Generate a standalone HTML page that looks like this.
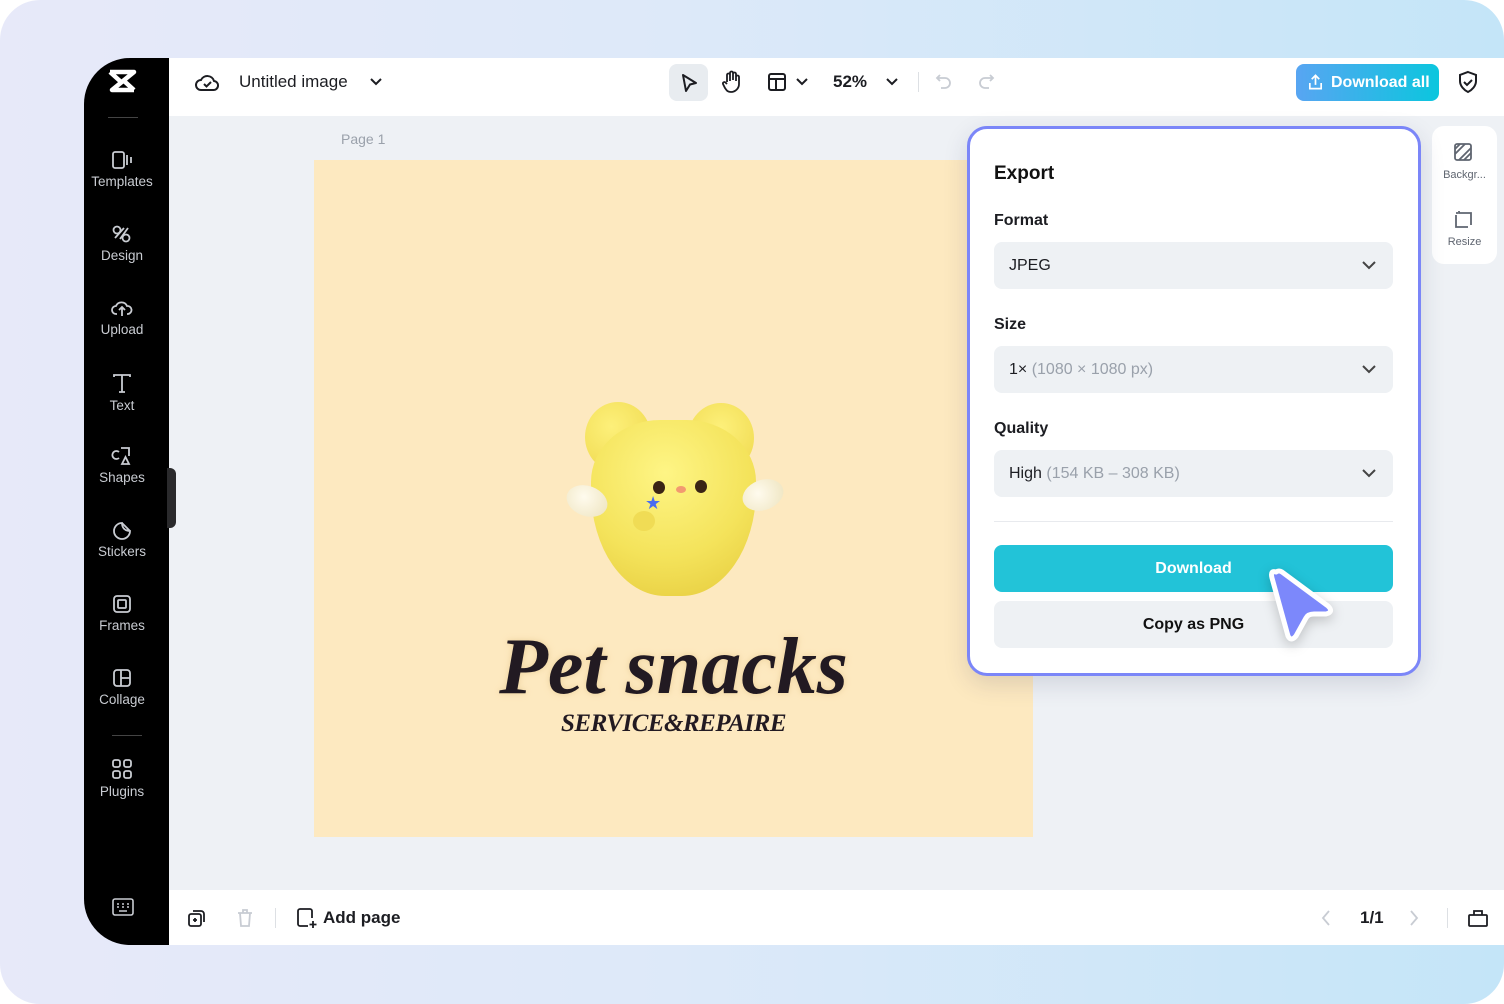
<!DOCTYPE html>
<html><head><meta charset="utf-8"><style>
*{box-sizing:border-box;margin:0;padding:0}
body{width:1504px;height:1004px;background:#fff;font-family:"Liberation Sans",sans-serif;position:relative;overflow:hidden}
.bg{position:absolute;inset:0;border-radius:40px;background:linear-gradient(90deg,#e7e9f9 0%,#dde9f9 45%,#c4e5f8 100%)}
.abs{position:absolute}
.side{left:84px;top:58px;width:85px;height:887px;background:#000;border-radius:46px 0 0 46px}
.top{left:169px;top:58px;width:1335px;height:58px;background:#fff}
.canvas{left:169px;top:116px;width:1335px;height:774px;background:#eef1f5}
.bottom{left:169px;top:890px;width:1335px;height:55px;background:#fff}
.nav{position:absolute;left:84px;width:76px;text-align:center;color:#c9ccd2;font-size:13.5px}
.nav svg{display:block;margin:0 auto 4px}
.field{position:absolute;left:994px;width:399px;height:47px;background:#eef1f4;border-radius:8px;font-size:16px;color:#1c1d22;padding:0 0 0 15px;line-height:47px}
.field .g{color:#9aa1ab}
.lbl{position:absolute;left:994px;font-size:16px;color:#1c1d22;font-weight:bold}
.chev{position:absolute;right:16px;top:17px}
</style></head><body>
<div class="bg"></div>
<div class="abs side"></div>
<div class="abs top"></div>
<div class="abs canvas"></div>
<div class="abs bottom"></div>
<svg class="abs" style="left:106px;top:68px" width="34" height="28" viewBox="0 0 34 28"><path d="M4 4h24L6 22h22M4 4l10 9M28 22L18 13" stroke="#fff" stroke-width="4.5" fill="none" stroke-linejoin="round"/></svg>
<div class="abs" style="left:108px;top:117px;width:30px;height:1px;background:#444"></div>
<div class="nav" style="top:150px"><svg width="22" height="20" viewBox="0 0 22 20" fill="none" stroke="#c9ccd2" stroke-width="1.8"><rect x="2" y="2" width="11" height="16" rx="2"/><path d="M16 5v10M20 7v6"/></svg>Templates</div>
<div class="nav" style="top:224px"><svg width="22" height="20" viewBox="0 0 22 20" fill="none" stroke="#c9ccd2" stroke-width="1.8"><circle cx="6" cy="6" r="3.5"/><circle cx="15" cy="14" r="3.5"/><path d="M9 15L17 4M4 14L13 4"/></svg>Design</div>
<div class="nav" style="top:298px"><svg width="22" height="20" viewBox="0 0 22 20" fill="none" stroke="#c9ccd2" stroke-width="1.8"><path d="M6 16H5a4 4 0 010-8 6 6 0 0111 0 4 4 0 011 8h-1M11 18v-8M8 12l3-3 3 3"/></svg>Upload</div>
<div class="nav" style="top:372px"><svg width="22" height="22" viewBox="0 0 22 22" fill="none" stroke="#c9ccd2" stroke-width="1.8"><path d="M3 5V3h16v2M11 3v17M8 20h6"/></svg>Text</div>
<div class="nav" style="top:446px"><svg width="22" height="20" viewBox="0 0 22 20" fill="none" stroke="#c9ccd2" stroke-width="1.8"><path d="M8 6a4 4 0 100 6M10 2h8v8M11 18l3.5-7 3.5 7z"/></svg>Shapes</div>
<div class="nav" style="top:520px"><svg width="22" height="20" viewBox="0 0 22 20" fill="none" stroke="#c9ccd2" stroke-width="1.8"><path d="M19 11a8 8 0 11-8-8c0 5 3 8 8 8zM11 3l8 8"/></svg>Stickers</div>
<div class="nav" style="top:594px"><svg width="22" height="20" viewBox="0 0 22 20" fill="none" stroke="#c9ccd2" stroke-width="1.8"><rect x="3" y="2" width="16" height="16" rx="3"/><rect x="7" y="6" width="8" height="8" rx="1"/></svg>Frames</div>
<div class="nav" style="top:668px"><svg width="22" height="20" viewBox="0 0 22 20" fill="none" stroke="#c9ccd2" stroke-width="1.8"><rect x="3" y="2" width="16" height="16" rx="3"/><path d="M10 2v16M10 10h9"/></svg>Collage</div>
<div class="abs" style="left:112px;top:735px;width:30px;height:1px;background:#444"></div>
<div class="nav" style="top:758px"><svg width="22" height="22" viewBox="0 0 22 22" fill="none" stroke="#c9ccd2" stroke-width="1.8"><rect x="2" y="2" width="7" height="7" rx="2"/><rect x="13" y="2" width="7" height="7" rx="2"/><rect x="2" y="13" width="7" height="7" rx="2"/><rect x="13" y="13" width="7" height="7" rx="2"/></svg>Plugins</div>
<svg class="abs" style="left:112px;top:898px" width="22" height="18" viewBox="0 0 22 18" fill="none" stroke="#c9ccd2" stroke-width="1.6"><rect x="1" y="1" width="20" height="16" rx="2"/><path d="M5 6h2M10 6h2M15 6h2M5 9h2M10 9h2M15 9h2M7 13h8"/></svg>
<div class="abs" style="left:167px;top:468px;width:9px;height:60px;background:#2a2a2c;border-radius:0 6px 6px 0"></div>
<svg class="abs" style="left:195px;top:71px" width="24" height="22" viewBox="0 0 24 22" fill="none" stroke="#1c1d22" stroke-width="2"><path d="M7 19H6a5 5 0 010-10 7 7 0 0113 1 4.5 4.5 0 01-1 9z"/><path d="M9 13l2.5 2.5L16 11"/></svg>
<div class="abs" style="left:239px;top:72px;font-size:17px;color:#1c1d22">Untitled image</div>
<svg class="abs" style="left:369px;top:77px" width="14" height="10" viewBox="0 0 14 10"><path d="M2 2l5 5 5-5" stroke="#1c1d22" stroke-width="2" fill="none"/></svg>
<div class="abs" style="left:669px;top:64px;width:39px;height:37px;background:#e8ecf0;border-radius:8px"></div>
<svg class="abs" style="left:679px;top:72px" width="20" height="22" viewBox="0 0 20 22"><path d="M4 3l13 8-6 1.5L7 19z" stroke="#1c1d22" stroke-width="2" fill="none" stroke-linejoin="round"/></svg>
<svg class="abs" style="left:721px;top:70px" width="22" height="24" viewBox="0 0 22 24" fill="none" stroke="#1c1d22" stroke-width="1.8"><path d="M6 12V5a1.5 1.5 0 013 0v6M9 10V3a1.5 1.5 0 013 0v7M12 10V4a1.5 1.5 0 013 0v7M15 10V7a1.5 1.5 0 013 0v7a8 8 0 01-8 8c-3 0-4-1-6-4l-2-4a1.5 1.5 0 012.5-1.5L6 14"/></svg>
<svg class="abs" style="left:767px;top:72px" width="20" height="20" viewBox="0 0 20 20" fill="none" stroke="#1c1d22" stroke-width="2"><rect x="2" y="2" width="16" height="16" rx="2"/><path d="M2 7h16M9 7v11"/></svg>
<svg class="abs" style="left:795px;top:77px" width="14" height="10" viewBox="0 0 14 10"><path d="M2 2l5 5 5-5" stroke="#1c1d22" stroke-width="2" fill="none"/></svg>
<div class="abs" style="left:833px;top:72px;font-size:17px;color:#1c1d22;font-weight:bold">52%</div>
<svg class="abs" style="left:885px;top:77px" width="14" height="10" viewBox="0 0 14 10"><path d="M2 2l5 5 5-5" stroke="#1c1d22" stroke-width="2" fill="none"/></svg>
<div class="abs" style="left:918px;top:72px;width:1px;height:20px;background:#dde0e4"></div>
<svg class="abs" style="left:934px;top:72px" width="20" height="20" viewBox="0 0 20 20" fill="none" stroke="#c8ccd3" stroke-width="1.8"><path d="M6 3L3 6l3 3M3 6h8a5 5 0 010 10H7"/></svg>
<svg class="abs" style="left:976px;top:72px" width="20" height="20" viewBox="0 0 20 20" fill="none" stroke="#c8ccd3" stroke-width="1.8"><path d="M14 3l3 3-3 3M17 6H9a5 5 0 000 10h4"/></svg>
<div class="abs" style="left:1296px;top:64px;width:143px;height:37px;border-radius:8px;background:linear-gradient(90deg,#58a5f2,#0bc6de);color:#fff;font-size:16px;font-weight:bold;line-height:37px;padding-left:35px">Download all</div>
<svg class="abs" style="left:1307px;top:73px" width="17" height="18" viewBox="0 0 18 18" fill="none" stroke="#fff" stroke-width="1.8"><path d="M9 12V2M5 6l4-4 4 4M3 10v6h12v-6"/></svg>
<svg class="abs" style="left:1457px;top:70px" width="22" height="24" viewBox="0 0 22 24" fill="none" stroke="#1c1d22" stroke-width="2"><path d="M11 2l8 3v6c0 5-4 9-8 11-4-2-8-6-8-11V5z"/><path d="M7 12l3 3 5-5"/></svg>
<div class="abs" style="left:341px;top:131px;font-size:14px;color:#9aa1ab">Page 1</div>
<div class="abs" style="left:314px;top:160px;width:719px;height:677px;background:#fde9c0"></div>
<div class="abs" style="left:585px;top:402px;width:66px;height:70px;border-radius:50%;background:radial-gradient(circle at 40% 35%,#fdf07a,#eed74a)"></div>
<div class="abs" style="left:688px;top:403px;width:66px;height:70px;border-radius:50%;background:radial-gradient(circle at 50% 35%,#fdf07a,#eed74a)"></div>
<div class="abs" style="left:591px;top:420px;width:165px;height:176px;border-radius:42% 42% 45% 45%/35% 35% 60% 60%;background:radial-gradient(circle at 45% 30%,#fef585,#f4e35b 55%,#e4c93a)"></div>
<div class="abs" style="left:566px;top:486px;width:42px;height:30px;border-radius:50%;background:radial-gradient(circle at 40% 40%,#fffbee,#ede3bd);transform:rotate(20deg)"></div>
<div class="abs" style="left:742px;top:480px;width:42px;height:30px;border-radius:50%;background:radial-gradient(circle at 40% 40%,#fffbee,#ede3bd);transform:rotate(-20deg)"></div>
<div class="abs" style="left:653px;top:481px;width:12px;height:13px;border-radius:50%;background:#3a2415"></div>
<div class="abs" style="left:695px;top:480px;width:12px;height:13px;border-radius:50%;background:#3a2415"></div>
<div class="abs" style="left:676px;top:486px;width:10px;height:7px;border-radius:50%;background:#f29a70"></div>
<div class="abs" style="left:633px;top:511px;width:22px;height:20px;border-radius:50%;background:#f0dc55"></div>
<div class="abs" style="left:645px;top:494px;font-size:18px;color:#4a6df0;line-height:1">★</div>
<div class="abs" style="left:314px;top:622px;width:719px;text-align:center;font-family:'Liberation Serif',serif;font-weight:bold;font-style:italic;font-size:80px;color:#221a22;letter-spacing:0;text-shadow:0 0 8px #f2d9a8,0 0 4px #f2d9a8">Pet snacks</div>
<div class="abs" style="left:314px;top:710px;width:719px;text-align:center;font-family:'Liberation Serif',serif;font-weight:bold;font-style:italic;font-size:25px;color:#221a22;letter-spacing:-0.5px">SERVICE&amp;REPAIRE</div>
<div class="abs" style="left:1432px;top:126px;width:65px;height:138px;background:#fff;border-radius:12px"></div>
<svg class="abs" style="left:1453px;top:142px" width="20" height="20" viewBox="0 0 20 20" fill="none" stroke="#5f6570" stroke-width="1.8"><rect x="2" y="2" width="16" height="16" rx="2"/><path d="M2 12L12 2M6 18L18 6M2 7l5-5M11 18l7-7"/></svg>
<div class="abs" style="left:1432px;top:169px;width:65px;text-align:center;font-size:11px;color:#5f6570">Backgr...</div>
<svg class="abs" style="left:1453px;top:209px" width="20" height="20" viewBox="0 0 20 20" fill="none" stroke="#5f6570" stroke-width="1.8"><path d="M3 6v12h12M6 2v2h12v12M3 4h2"/></svg>
<div class="abs" style="left:1432px;top:236px;width:65px;text-align:center;font-size:11px;color:#5f6570">Resize</div>
<div class="abs" style="left:967px;top:126px;width:454px;height:550px;background:#fff;border:3px solid #7b86f8;border-radius:20px;box-shadow:0 8px 24px rgba(40,50,90,.15)"></div>
<div class="abs" style="left:994px;top:163px;font-size:19px;font-weight:bold;color:#111">Export</div>
<div class="lbl" style="top:212px">Format</div>
<div class="field" style="top:242px">JPEG<svg class="chev" width="16" height="12" viewBox="0 0 16 12"><path d="M2 3l6 6 6-6" stroke="#444" stroke-width="2" fill="none"/></svg></div>
<div class="lbl" style="top:316px">Size</div>
<div class="field" style="top:346px">1× <span class="g">(1080 × 1080 px)</span><svg class="chev" width="16" height="12" viewBox="0 0 16 12"><path d="M2 3l6 6 6-6" stroke="#444" stroke-width="2" fill="none"/></svg></div>
<div class="lbl" style="top:420px">Quality</div>
<div class="field" style="top:450px">High <span class="g">(154 KB – 308 KB)</span><svg class="chev" width="16" height="12" viewBox="0 0 16 12"><path d="M2 3l6 6 6-6" stroke="#444" stroke-width="2" fill="none"/></svg></div>
<div class="abs" style="left:994px;top:521px;width:399px;height:1px;background:#e8eaee"></div>
<div class="abs" style="left:994px;top:545px;width:399px;height:47px;background:#22c3d8;border-radius:8px;color:#fff;text-align:center;line-height:47px;font-size:16px;font-weight:bold">Download</div>
<div class="abs" style="left:994px;top:601px;width:399px;height:47px;background:#eef1f4;border-radius:8px;color:#111;text-align:center;line-height:47px;font-size:16px;font-weight:bold">Copy as PNG</div>
<svg class="abs" style="left:1262px;top:562px;filter:drop-shadow(0 4px 6px rgba(0,0,0,.2))" width="75" height="82" viewBox="0 0 75 82"><path d="M14 10Q8 8 10 16L26 74Q29 80 34 74L44 56Q46 52 52 52L64 52Q72 50 66 44L20 10Q17 8 14 10z" fill="#7c88fb" stroke="#fff" stroke-width="5" stroke-linejoin="round"/></svg>
<svg class="abs" style="left:187px;top:908px" width="20" height="20" viewBox="0 0 20 20" fill="none" stroke="#1c1d22" stroke-width="1.8"><rect x="2" y="6" width="12" height="12" rx="2"/><path d="M6 3h8a3 3 0 013 3v8M8 10v4M6 12h4"/></svg>
<svg class="abs" style="left:236px;top:908px" width="18" height="20" viewBox="0 0 18 20" fill="none" stroke="#c8ccd3" stroke-width="1.8"><path d="M2 5h14M7 5V2h4v3M4 5l1 13h8l1-13"/></svg>
<div class="abs" style="left:275px;top:908px;width:1px;height:20px;background:#dde0e4"></div>
<svg class="abs" style="left:296px;top:907px" width="22" height="22" viewBox="0 0 22 22" fill="none" stroke="#1c1d22" stroke-width="1.8"><path d="M12 19H4a2 2 0 01-2-2V4a2 2 0 012-2h10a2 2 0 012 2v7M17 14v7M13.5 17.5h7"/></svg>
<div class="abs" style="left:323px;top:908px;font-size:17px;color:#1c1d22;font-weight:bold">Add page</div>
<svg class="abs" style="left:1320px;top:909px" width="12" height="18" viewBox="0 0 12 18"><path d="M9 2L3 9l6 7" stroke="#c8ccd3" stroke-width="1.8" fill="none"/></svg>
<div class="abs" style="left:1360px;top:908px;font-size:17px;color:#1c1d22;font-weight:bold">1/1</div>
<svg class="abs" style="left:1408px;top:909px" width="12" height="18" viewBox="0 0 12 18"><path d="M3 2l6 7-6 7" stroke="#c8ccd3" stroke-width="1.8" fill="none"/></svg>
<div class="abs" style="left:1447px;top:908px;width:1px;height:20px;background:#dde0e4"></div>
<svg class="abs" style="left:1467px;top:906px" width="22" height="22" viewBox="0 0 22 22" fill="none" stroke="#1c1d22" stroke-width="1.8"><rect x="2" y="9" width="18" height="11" rx="1"/><path d="M7 9V5h8v4"/></svg>
</body></html>
